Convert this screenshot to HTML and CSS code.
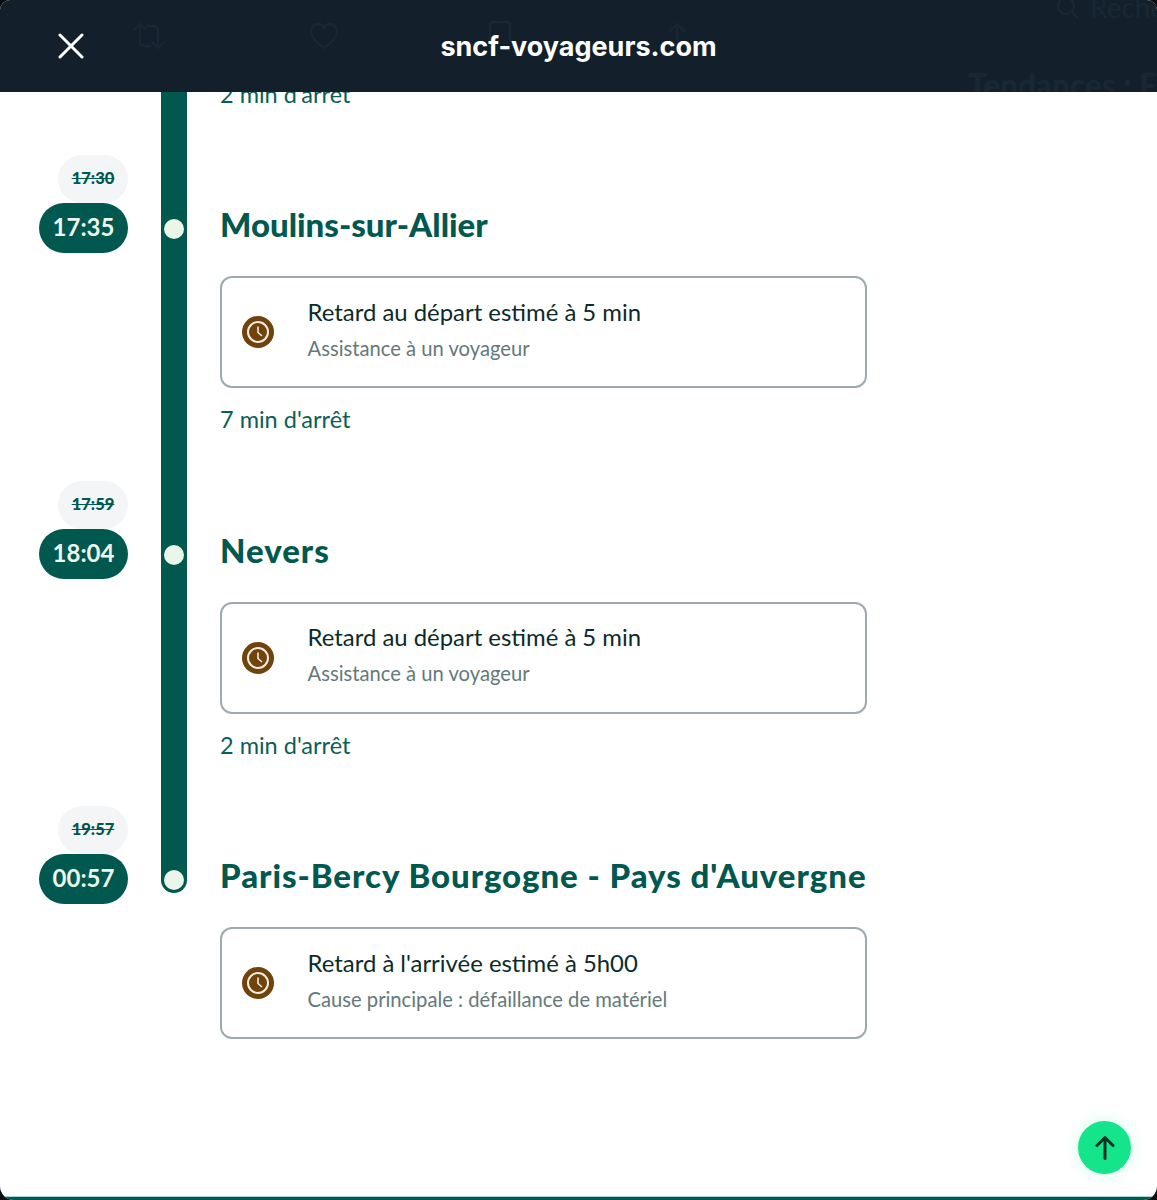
FILE: index.html
```html
<!DOCTYPE html>
<html lang="fr">
<head>
    <meta charset="UTF-8">
    <meta name="viewport" content="width=device-width, initial-scale=1.0">
    <title>sncf-voyageurs.com</title>
    <link rel="stylesheet" href="styles.css">
</head>
<body>
    <div class="sheet">
        <header class="topbar">
            <!-- what shows through the dimmed bar -->
            <svg class="ghost ghost-retweet" width="34" height="28" viewBox="0 0 34 28"><path d="M2 8 L8 2 L14 8 M8 3 V20 Q8 24 12 24 H19 M32 20 L26 26 L20 20 M26 25 V8 Q26 4 22 4 H15" fill="none" stroke="#182733" stroke-width="2.4"/></svg>
            <svg class="ghost ghost-heart" width="30" height="28" viewBox="0 0 30 28"><path d="M15 26 C5 19 2 14 2 9 C2 5 5 2 9 2 C12 2 14 4 15 6 C16 4 18 2 21 2 C25 2 28 5 28 9 C28 14 25 19 15 26 Z" fill="none" stroke="#182733" stroke-width="2.4"/></svg>
            <svg class="ghost ghost-mark" width="24" height="22" viewBox="0 0 24 22"><path d="M2 22 V5 Q2 2 5 2 H19 Q22 2 22 5 V22" fill="none" stroke="#182733" stroke-width="2.4"/></svg>
            <svg class="ghost ghost-share" width="26" height="28" viewBox="0 0 26 28"><path d="M5 10 L13 2 L21 10 M13 3 V20" fill="none" stroke="#182733" stroke-width="2.4"/></svg>
            <svg class="ghost ghost-lens" width="24" height="24" viewBox="0 0 24 24"><circle cx="10" cy="6" r="8" fill="none" stroke="#182733" stroke-width="2.4"/><path d="M16 12 L22 18" stroke="#182733" stroke-width="2.4"/></svg>
            <div class="ghost ghost-search">Recherche</div>
            <div class="ghost ghost-trends">Tendances : F</div>

            <button class="close-btn" aria-label="Fermer">
                <svg width="26" height="26" viewBox="0 0 26 26"><path d="M2 2 L24 24 M24 2 L2 24" stroke="#fff" stroke-width="3" stroke-linecap="round"/></svg>
            </button>
            <div class="site-name">sncf-voyageurs.com</div>
        </header>

        <main class="scroller">
            <div class="timeline">
                <div class="stop stop-tail">
                    <div class="times"></div>
                    <div class="rail"></div>
                    <div class="details"><div class="stop-note">2 min d'arrêt</div></div>
                </div>

                <div class="stop">
                    <div class="times">
                        <span class="time-old">17:30</span>
                        <span class="time-new">17:35</span>
                    </div>
                    <div class="rail"><span class="rail-dot"></span></div>
                    <div class="details">
                        <h2 class="stop-name">Moulins-sur-Allier</h2>
                        <div class="notice">
                            <svg class="notice-icon" width="32" height="32" viewBox="0 0 32 32"><circle cx="16" cy="16" r="16" fill="#6f430b"/><circle cx="16" cy="16" r="10" fill="none" stroke="#f4ede2" stroke-width="2"/><path d="M16 10.5 V16.5 L20 20" fill="none" stroke="#f4ede2" stroke-width="1.6"/></svg>
                            <div class="notice-text">
                                <div class="notice-title">Retard au départ estimé à 5 min</div>
                                <div class="notice-sub">Assistance à un voyageur</div>
                            </div>
                        </div>
                        <div class="stop-note">7 min d'arrêt</div>
                    </div>
                </div>

                <div class="stop">
                    <div class="times">
                        <span class="time-old">17:59</span>
                        <span class="time-new">18:04</span>
                    </div>
                    <div class="rail"><span class="rail-dot"></span></div>
                    <div class="details">
                        <h2 class="stop-name stop-name-wide">Nevers</h2>
                        <div class="notice">
                            <svg class="notice-icon" width="32" height="32" viewBox="0 0 32 32"><circle cx="16" cy="16" r="16" fill="#6f430b"/><circle cx="16" cy="16" r="10" fill="none" stroke="#f4ede2" stroke-width="2"/><path d="M16 10.5 V16.5 L20 20" fill="none" stroke="#f4ede2" stroke-width="1.6"/></svg>
                            <div class="notice-text">
                                <div class="notice-title">Retard au départ estimé à 5 min</div>
                                <div class="notice-sub">Assistance à un voyageur</div>
                            </div>
                        </div>
                        <div class="stop-note">2 min d'arrêt</div>
                    </div>
                </div>

                <div class="stop stop-last">
                    <div class="times">
                        <span class="time-old">19:57</span>
                        <span class="time-new">00:57</span>
                    </div>
                    <div class="rail"><span class="rail-dot"></span></div>
                    <div class="details">
                        <h2 class="stop-name stop-name-wide">Paris-Bercy Bourgogne - Pays d'Auvergne</h2>
                        <div class="notice">
                            <svg class="notice-icon" width="32" height="32" viewBox="0 0 32 32"><circle cx="16" cy="16" r="16" fill="#6f430b"/><circle cx="16" cy="16" r="10" fill="none" stroke="#f4ede2" stroke-width="2"/><path d="M16 10.5 V16.5 L20 20" fill="none" stroke="#f4ede2" stroke-width="1.6"/></svg>
                            <div class="notice-text">
                                <div class="notice-title">Retard à l'arrivée estimé à 5h00</div>
                                <div class="notice-sub">Cause principale : défaillance de matériel</div>
                            </div>
                        </div>
                    </div>
                </div>
            </div>

            <button class="top-btn" aria-label="Haut de page">
                <svg width="20" height="25" viewBox="0 0 20 25"><path d="M2 10.5 L10 2.5 L18 10.5 M10 2.5 V23.5" fill="none" stroke="#0a3226" stroke-width="3" stroke-linecap="round" stroke-linejoin="round"/></svg>
            </button>
        </main>
        <div class="page-edge"></div>
    </div>
</body>
</html>
```

FILE: styles.css
```css
html, body {
    margin: 0;
    padding: 0;
    background-color: #0b0f12;
}
.sheet {
    width: 1157px;
    height: 1200px;
    display: flex;
    flex-direction: column;
    overflow: hidden;
    background-color: #fff;
    border-radius: 10px 10px 14px 14px;
    font-family: Lato, "Open Sans", sans-serif;
}

/* Top bar */
.topbar {
    position: relative;
    flex: 0 0 92px;
    display: flex;
    align-items: center;
    justify-content: center;
    background-color: #13202c;
    overflow: hidden;
    z-index: 1;
}
.close-btn {
    position: absolute;
    left: 58px;
    top: 33px;
    width: 26px;
    height: 26px;
    padding: 0;
    border: 0;
    background: none;
    display: flex;
}
.site-name {
    position: relative;
    font-family: Inter, "Open Sans", sans-serif;
    font-size: 27px;
    font-weight: 700;
    color: #fff;
}
.ghost {
    position: absolute;
}
.ghost-retweet { left: 132px; top: 22px; }
.ghost-heart { left: 309px; top: 22px; }
.ghost-mark { left: 488px; top: 20px; }
.ghost-share { left: 664px; top: 22px; }
.ghost-lens { left: 1056px; top: 0; }
.ghost-search {
    left: 1090px;
    top: -10px;
    font-size: 28px;
    white-space: nowrap;
    color: #182733;
}
.ghost-trends {
    left: 968px;
    top: 66px;
    font-size: 31.5px;
    font-weight: 900;
    white-space: nowrap;
    color: #182733;
}

/* Timeline */
.scroller {
    position: relative;
    flex: 1;
    min-height: 0;
    overflow: hidden;
}
.timeline {
    margin-top: -10px;
    padding-left: 39px;
}
.stop {
    display: grid;
    grid-template-columns: 89px 26px 647px;
    column-gap: 33px;
}
.stop-tail .stop-note {
    margin-top: 0;
}
.stop-tail .details {
    padding-bottom: 49px;
}
.times {
    display: flex;
    flex-direction: column;
    align-items: flex-end;
}
.time-old {
    width: 70px;
    height: 48px;
    border-radius: 24px;
    background-color: #f3f5f6;
    color: #00584f;
    font-size: 16.5px;
    font-weight: 900;
    line-height: 46px;
    text-align: center;
    text-decoration: line-through;
}
.time-new {
    width: 89px;
    height: 50px;
    border-radius: 25px;
    background-color: #00584f;
    color: #eef7ee;
    font-size: 24px;
    font-weight: 700;
    line-height: 48px;
    text-align: center;
}
.rail {
    background-color: #00584f;
    display: flex;
    justify-content: center;
    align-items: flex-start;
}
.rail-dot {
    width: 20px;
    height: 20px;
    margin-top: 64px;
    border-radius: 50%;
    background-color: #eaf6e8;
}
.stop-last .rail {
    align-self: start;
    height: 87px;
    border-radius: 0 0 13px 13px;
}
.details {
    padding-bottom: 49.5px;
}
.stop-name {
    margin: 46px 0 29px;
    font-size: 33px;
    font-weight: 900;
    line-height: 46px;
    color: #00584f;
    white-space: nowrap;
}
.stop-name-wide {
    letter-spacing: 0.95px;
}
.notice {
    display: flex;
    align-items: center;
    gap: 33.5px;
    box-sizing: border-box;
    height: 112px;
    padding-left: 20px;
    border: 2px solid #9eabae;
    border-radius: 12px;
}
.notice-icon {
    flex: none;
}
.notice-text {
    padding-bottom: 7px;
}
.notice-title {
    font-size: 23.9px;
    line-height: 30px;
    color: #0b2b2a;
}
.notice-sub {
    margin-top: 8px;
    font-size: 20.2px;
    line-height: 26px;
    color: #64797b;
}
.stop-note {
    margin-top: 19px;
    font-size: 23.5px;
    line-height: 24px;
    color: #0b5e56;
}

/* Back to top */
.top-btn {
    position: absolute;
    right: 26px;
    bottom: 22px;
    width: 53px;
    height: 53px;
    padding: 0;
    border: 0;
    border-radius: 50%;
    background-color: #14e58a;
    box-shadow: 0 0 16px rgba(20, 229, 138, 0.2);
    display: flex;
    align-items: center;
    justify-content: center;
}
.page-edge {
    flex: 0 0 4px;
    background-color: #00584f;
    border-top: 1px solid #a9d4d2;
    box-sizing: border-box;
}
```
